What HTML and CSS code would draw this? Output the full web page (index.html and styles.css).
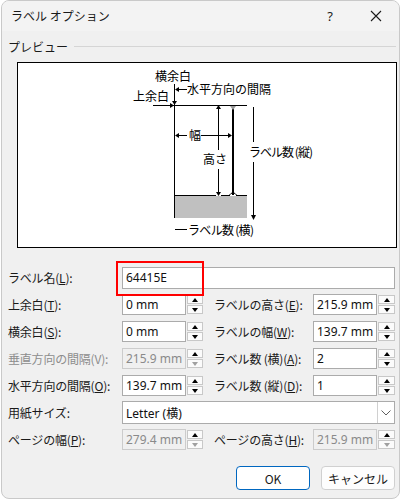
FILE: index.html
```html
<!DOCTYPE html>
<html lang="ja">
<head>
    <meta charset="UTF-8">
    <title>ラベル オプション</title>
    <link rel="stylesheet" href="styles.css">
</head>
<body>
    <div class="dialog">
        <div class="titlebar">
            <span class="title">ラベル オプション</span>
            <span class="help">?</span>
            <span class="close">
                <svg width="12" height="12" viewBox="0 0 12 12"><path d="M1 1 L11 11 M11 1 L1 11" stroke="#1b1b1b" stroke-width="1.1" fill="none"/></svg>
            </span>
        </div>

        <div class="content">
            <div class="group-head">
                <span>プレビュー</span>
                <span class="rule"></span>
            </div>

            <div class="preview">
                <svg width="378" height="184" viewBox="18 63 378 184">
                    <rect x="175" y="196" width="72" height="22" fill="#c0c0c0"/>
                    <g stroke="#000" stroke-width="1" fill="none">
                        <path d="M153 105.5 H247"/>
                        <path d="M174.5 84 V218"/>
                        <path d="M177 89.5 H187"/>
                        <path d="M218.5 108 V150 M218.5 169 V193"/>
                        <path d="M177 135.5 H187 M201 135.5 H230"/>
                        <path d="M175 195.5 H216 M221 195.5 H230 M236 195.5 H247"/>
                        <path d="M253.5 107 V142 M253.5 162 V216"/>
                        <path d="M175 229.5 H187"/>
                    </g>
                    <rect x="232" y="106" width="2" height="89" fill="#000"/>
                    <g fill="#000">
                        <path d="M172 101 L177 101 L174.5 105 Z"/>
                        <path d="M175 89.5 L179 87 L179 92 Z"/>
                        <path d="M170 103 L174 105.5 L170 108 Z"/>
                        <path d="M218.5 105 L216 109 L221 109 Z"/>
                        <path d="M218.5 196 L216 192 L221 192 Z"/>
                        <path d="M175 135.5 L179 133 L179 138 Z"/>
                        <path d="M232 135.5 L228 133 L228 138 Z"/>
                        <path d="M253.5 220 L251 215 L256 215 Z"/>
                    </g>
                    <path d="M230 106 L236 106 L233 110 Z" fill="#9a9a9a"/>
                    <path d="M229 195.5 Q233 190 237 195.5" stroke="#000" fill="none"/>
                    <g class="dia-text">
                        <text x="155" y="81">横余白</text>
                        <text x="133" y="101">上余白</text>
                        <text x="187" y="94">水平方向の間隔</text>
                        <text x="189" y="140">幅</text>
                        <text x="203" y="164">高さ</text>
                        <text x="249" y="157" textLength="64">ラベル数 (縦)</text>
                        <text x="188" y="235" textLength="66">ラベル数 (横)</text>
                    </g>
                </svg>
            </div>

            <div class="form">
                <label class="lbl">ラベル名(<u>L</u>):</label>
                <div class="field wide name-field">
                    <span class="val">64415E</span>
                    <span class="highlight"></span>
                </div>

                <label class="lbl">上余白(<u>T</u>):</label>
                <div class="field"><span class="val">0 mm</span></div>
                <div class="spin"><span class="up"></span><span class="down"></span></div>
                <span></span>
                <label class="lbl">ラベルの高さ(<u>E</u>):</label>
                <div class="field"><span class="val">215.9 mm</span></div>
                <div class="spin"><span class="up"></span><span class="down"></span></div>

                <label class="lbl">横余白(<u>S</u>):</label>
                <div class="field"><span class="val">0 mm</span></div>
                <div class="spin"><span class="up"></span><span class="down"></span></div>
                <span></span>
                <label class="lbl">ラベルの幅(<u>W</u>):</label>
                <div class="field"><span class="val">139.7 mm</span></div>
                <div class="spin"><span class="up"></span><span class="down"></span></div>

                <label class="lbl off">垂直方向の間隔(V):</label>
                <div class="field off"><span class="val">215.9 mm</span></div>
                <div class="spin off"><span class="up"></span><span class="down"></span></div>
                <span></span>
                <label class="lbl">ラベル数 (横)(<u>A</u>):</label>
                <div class="field"><span class="val">2</span></div>
                <div class="spin"><span class="up"></span><span class="down"></span></div>

                <label class="lbl">水平方向の間隔(<u>O</u>):</label>
                <div class="field"><span class="val">139.7 mm</span></div>
                <div class="spin"><span class="up"></span><span class="down"></span></div>
                <span></span>
                <label class="lbl">ラベル数 (縦)(<u>D</u>):</label>
                <div class="field"><span class="val">1</span></div>
                <div class="spin"><span class="up"></span><span class="down"></span></div>

                <label class="lbl">用紙サイズ:</label>
                <div class="field wide select">
                    <span class="val">Letter (横)</span>
                    <span class="drop">
                        <svg width="10" height="6" viewBox="0 0 10 6"><path d="M0.5 0.5 L5 5 L9.5 0.5" stroke="#606060" fill="none"/></svg>
                    </span>
                </div>

                <label class="lbl">ページの幅(<u>P</u>):</label>
                <div class="field off"><span class="val">279.4 mm</span></div>
                <div class="spin off"><span class="up"></span><span class="down"></span></div>
                <span></span>
                <label class="lbl">ページの高さ(<u>H</u>):</label>
                <div class="field off"><span class="val">215.9 mm</span></div>
                <div class="spin off"><span class="up"></span><span class="down"></span></div>
            </div>

            <div class="actions">
                <button class="btn primary">OK</button>
                <button class="btn">キャンセル</button>
            </div>
        </div>
    </div>
</body>
</html>
```

FILE: styles.css
```css
* {
    margin: 0;
    padding: 0;
    box-sizing: border-box;
}

body {
    background: #fff;
    font-family: "Noto Sans CJK JP", "Noto Sans", sans-serif;
    font-size: 12px;
    color: #1a1a1a;
}

.dialog {
    margin-left: 1px;
    width: 399px;
    height: 499px;
    background: #f0f0f0;
    border: 1px solid #c9c9c9;
    border-radius: 8px;
    overflow: hidden;
}

.titlebar {
    height: 30px;
    background: #f3f3f3;
    display: flex;
    align-items: center;
    padding-left: 9px;
}

.title {
    flex: 1;
    margin-top: -1px;
}

.help {
    font-family: "Noto Sans", sans-serif;
    font-size: 13px;
    width: 46px;
    text-align: center;
}

.close {
    width: 46px;
    display: flex;
    justify-content: center;
}

.content {
    padding: 5px 3px 0 6px;
}

.group-head {
    display: flex;
    align-items: center;
    height: 20px;
    gap: 6px;
}

.group-head .rule {
    flex: 1;
    height: 1px;
    background: #d5d5d5;
}

.preview {
    margin: 6px 0 0 9px;
    width: 380px;
    height: 186px;
    background: #fff;
    border: 1px solid #000;
}

.preview svg {
    display: block;
}

.dia-text text {
    font-family: "Noto Sans CJK JP", sans-serif;
    font-size: 12px;
    fill: #000;
}

.form {
    margin-top: 19px;
    display: grid;
    grid-template-columns: 114px 64px 17px 11px 99px 64px 18px;
    grid-auto-rows: 21px;
    row-gap: 6px;
    align-items: center;
}

.lbl {
    white-space: nowrap;
    letter-spacing: -0.2px;
}

.lbl.off {
    color: #8d8d8d;
}

.field {
    height: 21px;
    background: #fff;
    border: 1px solid #ababab;
    display: flex;
    align-items: center;
    padding-left: 3px;
    font-family: "Noto Sans", "Noto Sans CJK JP", sans-serif;
    font-size: 12px;
    white-space: nowrap;
    overflow: hidden;
    color: #111;
}

.field.off {
    background: #f0f0f0;
    border-color: #cccccc;
    color: #8a8a8a;
}

.field.wide {
    grid-column: 2 / 8;
}

.name-field {
    position: relative;
    overflow: visible;
    height: 22px;
}

.highlight {
    position: absolute;
    left: -7px;
    top: -7px;
    width: 88px;
    height: 35px;
    border: 2px solid #ff0000;
}

.select {
    height: 23px;
    padding-right: 0;
}

.select .val {
    flex: 1;
}

.drop {
    width: 17px;
    height: 100%;
    border-left: 1px solid #d0d0d0;
    display: flex;
    align-items: center;
    justify-content: center;
}

.spin {
    margin-left: 1px;
    height: 19px;
    display: flex;
    flex-direction: column;
    gap: 1px;
}

.spin span {
    flex: 1;
    background: #fbfbfb;
    border: 1px solid #c8c8c8;
    display: flex;
    align-items: center;
    justify-content: center;
}

.spin .up::after,
.spin .down::after {
    content: "";
    width: 0;
    height: 0;
    border-left: 3px solid transparent;
    border-right: 3px solid transparent;
}

.spin .up::after {
    border-bottom: 4px solid #000;
}

.spin .down::after {
    border-top: 4px solid #000;
}

.spin.off .down::after {
    border-top-color: #a0a0a0;
}

.actions {
    margin-top: 16px;
    display: flex;
    justify-content: flex-end;
    gap: 11px;
    padding-right: 1px;
}

.btn {
    height: 24px;
    width: 74px;
    border-radius: 4px;
    background: #fdfdfd;
    border: 1px solid #d0d0d0;
    font-family: "Noto Sans CJK JP", "Noto Sans", sans-serif;
    font-size: 12px;
    color: #1a1a1a;
}

.btn.primary {
    border-color: #0067c0;
    background: #fff;
}
```
